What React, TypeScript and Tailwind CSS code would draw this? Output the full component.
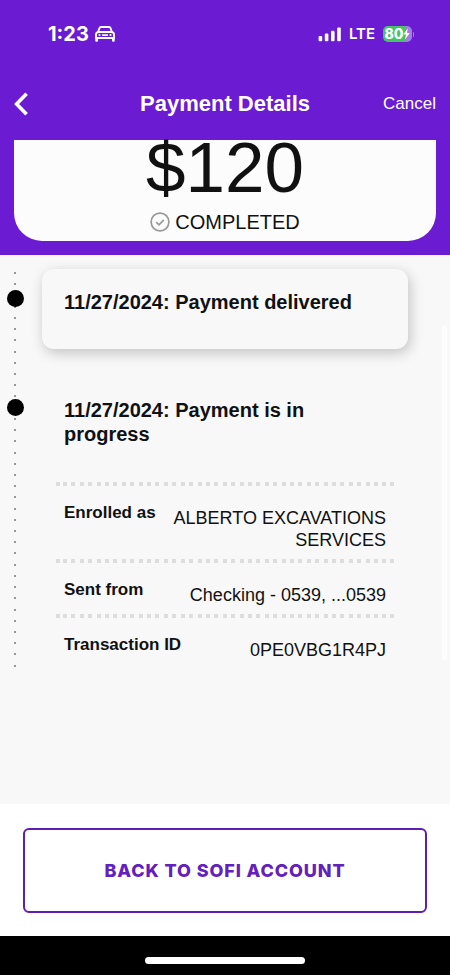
import React from 'react';

const details = [
   { label: 'Enrolled as', value: 'ALBERTO EXCAVATIONS SERVICES' },
   { label: 'Sent from', value: 'Checking - 0539, ...0539' },
   { label: 'Transaction ID', value: '0PE0VBG1R4PJ' },
];

function CarIcon() {
   return (
      <svg width="20" height="16" viewBox="0 0 20 16" fill="none" stroke="currentColor" strokeWidth="1.9" strokeLinejoin="round" strokeLinecap="round">
         <path d="M3 6.2 L4.4 2.2 Q4.8 1 6 1 H14 Q15.2 1 15.6 2.2 L17 6.2" />
         <path d="M3.2 6 H16.8 Q19 6.4 19 8.6 V12 H1 V8.6 Q1 6.4 3.2 6 Z" />
         <path d="M1.2 12.5 V14.8 H2 V12.5 M18 12.5 V14.8 H18.8 V12.5" />
         <path d="M7.6 9.1 H12.4" strokeWidth="1.6" />
         <path d="M4.4 9.1 H4.6 M15.4 9.1 H15.6" strokeWidth="2" />
      </svg>
   );
}

function SignalIcon() {
   return (
      <svg width="23" height="15" viewBox="0 0 23 15" fill="currentColor">
         <rect x="0.6" y="9" width="3.6" height="5.3" rx="1.1" />
         <rect x="6.8" y="6.5" width="3.6" height="7.8" rx="1.1" />
         <rect x="13" y="3.8" width="3.6" height="10.5" rx="1.1" />
         <rect x="19.2" y="0.4" width="3.6" height="13.9" rx="1.1" />
      </svg>
   );
}

function Battery() {
   return (
      <div className="flex items-center gap-px">
         <div className="flex h-4 w-[29px] items-center justify-center rounded-[5px] bg-linear-to-r from-[#45c466] from-80% to-[#a27ce2] to-80%">
            <span className="text-sm leading-4 font-extrabold">80</span>
            <svg width="7" height="12" viewBox="0 0 7 12" fill="currentColor">
               <path d="M4.8 0.3 L0.3 6.6 H3 L2 11.6 L6.8 5 H4 Z" />
            </svg>
         </div>
         <div className="h-[5px] w-px rounded-r bg-[#a27ce2]" />
      </div>
   );
}

function DottedRule() {
   return (
      <div className="flex h-1 justify-between" aria-hidden="true">
         <span className="size-1 bg-[#dddddd]" />
         <span className="flex flex-1 justify-between px-[3px]">
            {Array.from({ length: 39 }, (_, i) => (
               <span key={i} className="size-1 bg-[#dddddd]" />
            ))}
         </span>
         <span className="size-1 bg-[#dddddd]" />
      </div>
   );
}

function TimelineRail() {
   return (
      <div className="relative ml-[7px] flex w-[17px] flex-col justify-between pt-[3px] pb-[2px] pl-[7px]" aria-hidden="true">
         {Array.from({ length: 36 }, (_, i) => (
            <span key={i} className="size-[2px] rounded-full bg-[#777777]" />
         ))}
         <span className="absolute top-[21px] left-0 size-[17px] rounded-full bg-black" />
         <span className="absolute top-[130px] left-0 size-[17px] rounded-full bg-black" />
      </div>
   );
}

export default function App() {
   return (
      <div className="flex min-h-screen flex-col bg-[#f8f8f8] font-['Liberation_Sans',Arial,sans-serif] text-[#111111]">
         <header className="bg-[#6b1bd1] px-[14px] pt-[22px] pb-[14px] text-white">
            <div className="flex h-6 items-center justify-between pr-[22px] pl-[34px] font-['Inter',sans-serif]">
               <div className="flex items-center gap-[6px]">
                  <span className="text-xl leading-6 font-bold">1:23</span>
                  <CarIcon />
               </div>
               <div className="flex items-center gap-2">
                  <SignalIcon />
                  <span className="text-[15px] leading-6 font-semibold">LTE</span>
                  <Battery />
               </div>
            </div>

            <div className="mt-11 grid h-7 grid-cols-[1fr_auto_1fr] items-center">
               <button type="button" aria-label="Back" className="justify-self-start">
                  <svg width="15" height="24" viewBox="0 0 15 24" fill="none" stroke="currentColor" strokeWidth="3.6">
                     <path d="M12.6 1.8 L2.6 12 L12.6 22.2" />
                  </svg>
               </button>
               <h1 className="text-[22px] leading-7 font-bold">Payment Details</h1>
               <button type="button" className="justify-self-end text-[17px] leading-7">Cancel</button>
            </div>

            <div className="mt-[22px] flex flex-col items-center rounded-b-[28px] bg-[#fcfcfc] pb-[5px] text-[#111111]">
               <p className="text-[71px] leading-[56px]">$120</p>
               <p className="mt-3 flex items-center gap-[5px] text-xl leading-7">
                  <svg width="20" height="20" viewBox="0 0 20 20" fill="none" stroke="#999999" strokeWidth="1.7">
                     <circle cx="10" cy="10" r="8.9" />
                     <path d="M6.2 10.2 L9 12.8 L13.8 7.8" />
                  </svg>
                  COMPLETED
               </p>
            </div>
         </header>

         <main className="relative flex-1 pt-[14px]">
            <div className="flex">
               <TimelineRail />
               <div className="mr-[42px] ml-[18px] flex-1">
                  <section className="rounded-xl bg-[#f8f8f8] px-[22px] pt-[21px] pb-[35px] shadow-[2px_4px_14px_rgba(0,0,0,0.22)]">
                     <h2 className="text-xl leading-6 font-bold">11/27/2024: Payment delivered</h2>
                  </section>
                  <section className="mt-[49px]">
                     <h2 className="px-[22px] text-xl leading-6 font-bold">11/27/2024: Payment is in progress</h2>
                     <dl className="mx-[14px] mt-9">
                        {details.map((item) => (
                           <div key={item.label}>
                              <DottedRule />
                              <div className="flex items-start justify-between gap-3 px-2 pt-[17px] pb-2">
                                 <dt className="shrink-0 text-[17px] leading-5 font-bold">{item.label}</dt>
                                 <dd className="mt-1 text-right text-lg leading-[22px]">{item.value}</dd>
                              </div>
                           </div>
                        ))}
                     </dl>
                  </section>
               </div>
            </div>
            <div className="absolute top-[70px] right-[3px] h-[335px] w-[5px] rounded-full bg-[#fdfdfd]" />
         </main>

         <footer>
            <div className="bg-white px-[23px] pt-6 pb-[23px]">
               <button type="button" className="w-full rounded-md border-2 border-[#5f1db5] py-[28px] font-['Inter',sans-serif] text-lg leading-[25px] font-extrabold tracking-wider text-[#6320bd]">
                  BACK TO SOFI ACCOUNT
               </button>
            </div>
            <div className="flex justify-center bg-black pt-[21px] pb-[11px]">
               <div className="h-[7px] w-40 rounded-full bg-white" />
            </div>
         </footer>
      </div>
   );
}
